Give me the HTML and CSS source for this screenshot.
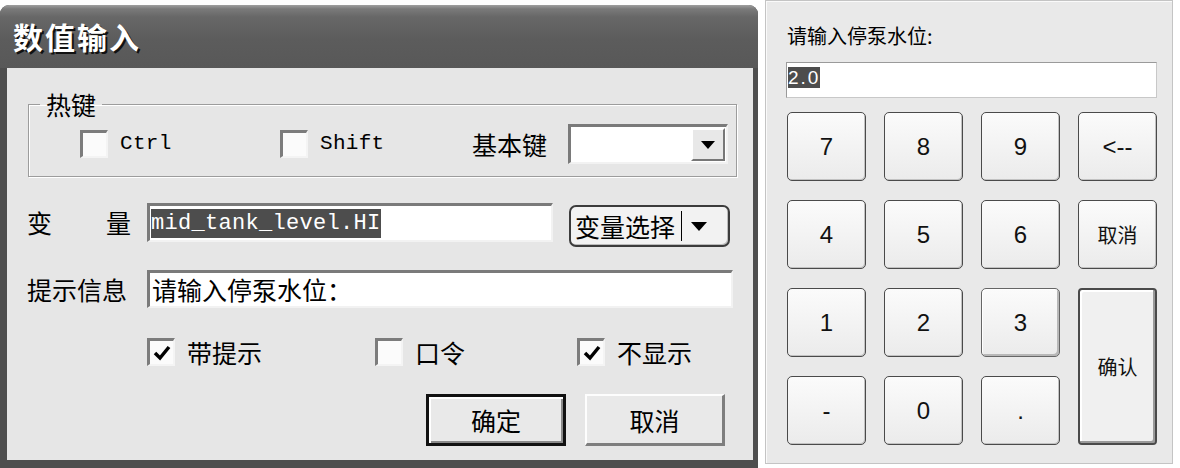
FILE: index.html
```html
<!DOCTYPE html>
<html lang="zh-CN">
  <head>
    <meta charset="UTF-8" />
    <title>数值输入</title>
    <link rel="stylesheet" href="styles.css">
  </head>
  <body>
    <div class="screen">
      <div class="dialog">
        <div class="titlebar">数值输入</div>
        <div class="dialog-body">
          <fieldset class="hotkeys">
            <legend>热键</legend>
            <div class="hotkeys-row">
              <label class="check"><span class="box"></span><span class="mono">Ctrl</span></label>
              <label class="check"><span class="box"></span><span class="mono">Shift</span></label>
              <span class="key-label">基本键</span>
              <div class="combo">
                <span class="combo-btn">
                  <svg width="14" height="8" viewBox="0 0 14 8"><path d="M0 0H14L7 8Z" fill="#000"/></svg>
                </span>
              </div>
            </div>
          </fieldset>

          <div class="form-row var-row">
            <span class="row-label spread"><span>变</span><span>量</span></span>
            <div class="text-input mono"><span class="selected">mid_tank_level.HI</span></div>
            <button class="pick-btn">变量选择<span class="pick-sep"></span><svg width="16" height="9" viewBox="0 0 16 9"><path d="M0 0H16L8 9Z" fill="#000"/></svg></button>
          </div>

          <div class="form-row">
            <span class="row-label">提示信息</span>
            <div class="text-input">请输入停泵水位：</div>
          </div>

          <div class="options">
            <label class="check"><span class="box"><svg width="20" height="20" viewBox="0 0 20 20"><path d="M3 10L8 15L17 4" stroke="#000" stroke-width="3.5" fill="none"/></svg></span>带提示</label>
            <label class="check"><span class="box"></span>口令</label>
            <label class="check"><span class="box"><svg width="20" height="20" viewBox="0 0 20 20"><path d="M3 10L8 15L17 4" stroke="#000" stroke-width="3.5" fill="none"/></svg></span>不显示</label>
          </div>

          <div class="actions">
            <button class="btn btn-default">确定</button>
            <button class="btn">取消</button>
          </div>
        </div>
      </div>

      <div class="keypad">
        <div class="keypad-label">请输入停泵水位:</div>
        <div class="keypad-input"><span class="selected">2.0</span></div>
        <div class="keys">
          <button class="key">7</button>
          <button class="key">8</button>
          <button class="key">9</button>
          <button class="key">&lt;--</button>
          <button class="key">4</button>
          <button class="key">5</button>
          <button class="key">6</button>
          <button class="key key-cjk">取消</button>
          <button class="key">1</button>
          <button class="key">2</button>
          <button class="key key-focus">3</button>
          <button class="key key-cjk key-enter">确认</button>
          <button class="key">-</button>
          <button class="key">0</button>
          <button class="key">.</button>
        </div>
      </div>
    </div>
  </body>
</html>
```

FILE: styles.css
```css
* {
  margin: 0;
  padding: 0;
  box-sizing: border-box;
}
body {
  background: #fff;
  font-family: "Noto Sans CJK SC", sans-serif;
  color: #000;
}
.screen {
  display: flex;
  align-items: flex-start;
}
.mono {
  font-family: "Liberation Mono", "DejaVu Sans Mono", monospace;
}

/* dialog */
.dialog {
  width: 758px;
  height: 463px;
  margin-top: 5px;
  background: #4e4e4e;
  border-radius: 9px 9px 0 0;
  display: flex;
  flex-direction: column;
}
.titlebar {
  height: 63px;
  line-height: 62px;
  padding-left: 13px;
  border-radius: 9px 9px 0 0;
  background: linear-gradient(#a0a0a0 0, #7a7a7a 4px, #676767 12px, #5c5c5c 55%, #585858 100%);
  color: #fff;
  font-size: 30px;
  font-weight: bold;
  letter-spacing: 2px;
  text-shadow: 2px 2px 0 #111;
}
.dialog-body {
  flex: 1;
  margin: 0 5px 8px 7px;
  background: #e6e6e6;
  padding: 22px 20px 0 20px;
  font-size: 25px;
  line-height: 28px;
}

/* hotkey group */
.hotkeys {
  margin-left: 1px;
  margin-right: 3px;
  border: 1px solid #9c9c9c;
  box-shadow: 1px 1px 0 #fff, inset 1px 1px 0 #fff;
  padding: 6px 8px 12px 0;
}
.hotkeys legend {
  margin-left: 11px;
  padding: 0 6px;
  font-size: 25px;
  line-height: 28px;
}
.hotkeys-row {
  display: grid;
  grid-template-columns: 200px 192px 96px 160px;
  align-items: center;
  padding-left: 51px;
}
.mono {
  font-size: 21px;
  letter-spacing: 0.3px;
}
.check {
  display: flex;
  align-items: center;
  gap: 12px;
}
.box {
  width: 28px;
  height: 28px;
  background: #fbfbfb;
  border-top: 3px solid #7c7c7c;
  border-left: 3px solid #7c7c7c;
  border-bottom: 2px solid #f4f4f4;
  border-right: 2px solid #f4f4f4;
  display: flex;
  align-items: center;
  justify-content: center;
}
.combo {
  height: 40px;
  background: #fff;
  border-top: 3px solid #7a7a7a;
  border-left: 3px solid #7a7a7a;
  border-bottom: 2px solid #f2f2f2;
  border-right: 2px solid #f2f2f2;
  display: flex;
  justify-content: flex-end;
  padding: 1px;
}
.combo-btn {
  width: 34px;
  background: #e8e8e8;
  border-top: 2px solid #fff;
  border-left: 2px solid #fff;
  border-bottom: 2px solid #777;
  border-right: 2px solid #777;
  display: flex;
  align-items: center;
  justify-content: center;
}

/* form rows */
.form-row {
  display: grid;
  grid-template-columns: 104px 1fr;
  column-gap: 16px;
  align-items: start;
  margin-top: 23px;
}
.var-row {
  grid-template-columns: 104px 406px 161px;
  margin-top: 26px;
  height: 44px;
}
.row-label {
  padding-top: 5px;
  white-space: nowrap;
}
.spread {
  display: flex;
  justify-content: space-between;
}
.text-input {
  height: 38px;
  background: #fff;
  border-top: 3px solid #7a7a7a;
  border-left: 3px solid #7a7a7a;
  border-bottom: 2px solid #f2f2f2;
  border-right: 2px solid #f2f2f2;
  padding: 2px 2px;
  white-space: nowrap;
  overflow: hidden;
}
.var-row .text-input {
  height: 39px;
  padding: 3px 1px;
  font-size: 22px;
  letter-spacing: 0.3px;
  line-height: 29px;
}
.selected {
  background: #4d4d4d;
  color: #fff;
  display: inline-block;
}
.pick-btn {
  margin-top: 2px;
  height: 42px;
  border: 2px solid #3c3c3c;
  border-radius: 7px;
  background: #f2f2f2;
  box-shadow: inset -1px -1px 0 #bbb;
  font-family: inherit;
  font-size: 25px;
  display: flex;
  align-items: center;
  padding-left: 4px;
}
.pick-sep {
  width: 1px;
  height: 30px;
  background: #000;
  margin: 0 9px 0 6px;
}

/* option checkboxes */
.options {
  display: grid;
  grid-template-columns: 228px 202px auto;
  margin: 30px 0 0 120px;
}

/* buttons */
.actions {
  display: flex;
  justify-content: flex-end;
  gap: 19px;
  margin: 28px 8px 0 0;
}
.btn {
  width: 140px;
  height: 52px;
  background: #e9e9e9;
  font-family: inherit;
  font-size: 25px;
  border-top: 2px solid #fdfdfd;
  border-left: 2px solid #fdfdfd;
  border-bottom: 3px solid #7e7e7e;
  border-right: 3px solid #7e7e7e;
}
.btn-default {
  border: 3px solid #111;
  box-shadow: inset 2px 2px 0 #fff, inset -2px -2px 0 #8a8a8a;
}

/* keypad */
.keypad {
  margin-left: 7px;
  width: 408px;
  height: 464px;
  background: #e9e9e9;
  border: 1px solid #c4c4c4;
  box-shadow: inset 1px 1px 0 #fafafa;
  padding: 23px 15px 0 21px;
}
.keypad-label {
  font-size: 20px;
  line-height: 24px;
}
.keypad-input {
  margin: 14px 0 0 -1px;
  height: 36px;
  background: #fff;
  border: 1px solid #9a9a9a;
  border-bottom-color: #c8c8c8;
  border-right-color: #c8c8c8;
  padding: 4px 1px;
  font-family: "Liberation Sans Narrow", "Liberation Sans", sans-serif;
  font-size: 19px;
  letter-spacing: 2px;
  line-height: 21px;
}
.keys {
  margin-top: 14px;
  display: grid;
  grid-template-columns: repeat(4, 79px);
  grid-auto-rows: 69px;
  gap: 19px 18px;
}
.key {
  border: 1px solid #4a4a4a;
  border-radius: 5px;
  background: linear-gradient(#fbfbfb, #ebebeb);
  box-shadow: inset -1px -1px 0 #c2c2c2;
  font-family: "Liberation Sans Narrow", "Liberation Sans", sans-serif;
  font-size: 24px;
  color: #111;
}
.key-cjk {
  font-family: "Noto Sans CJK SC", sans-serif;
  font-size: 20px;
}
.key-focus {
  border-color: #666;
  box-shadow: inset 1px 1px 0 #fff, inset -2px -2px 0 #b8b8b8;
}
.key-enter {
  grid-column: 4;
  grid-row: 3 / span 2;
  border: 2px solid #4a4a4a;
  border-radius: 4px;
  box-shadow: inset -2px -2px 0 #9a9a9a, inset 2px 2px 0 #fff;
  background: #f0f0f0;
}
```
